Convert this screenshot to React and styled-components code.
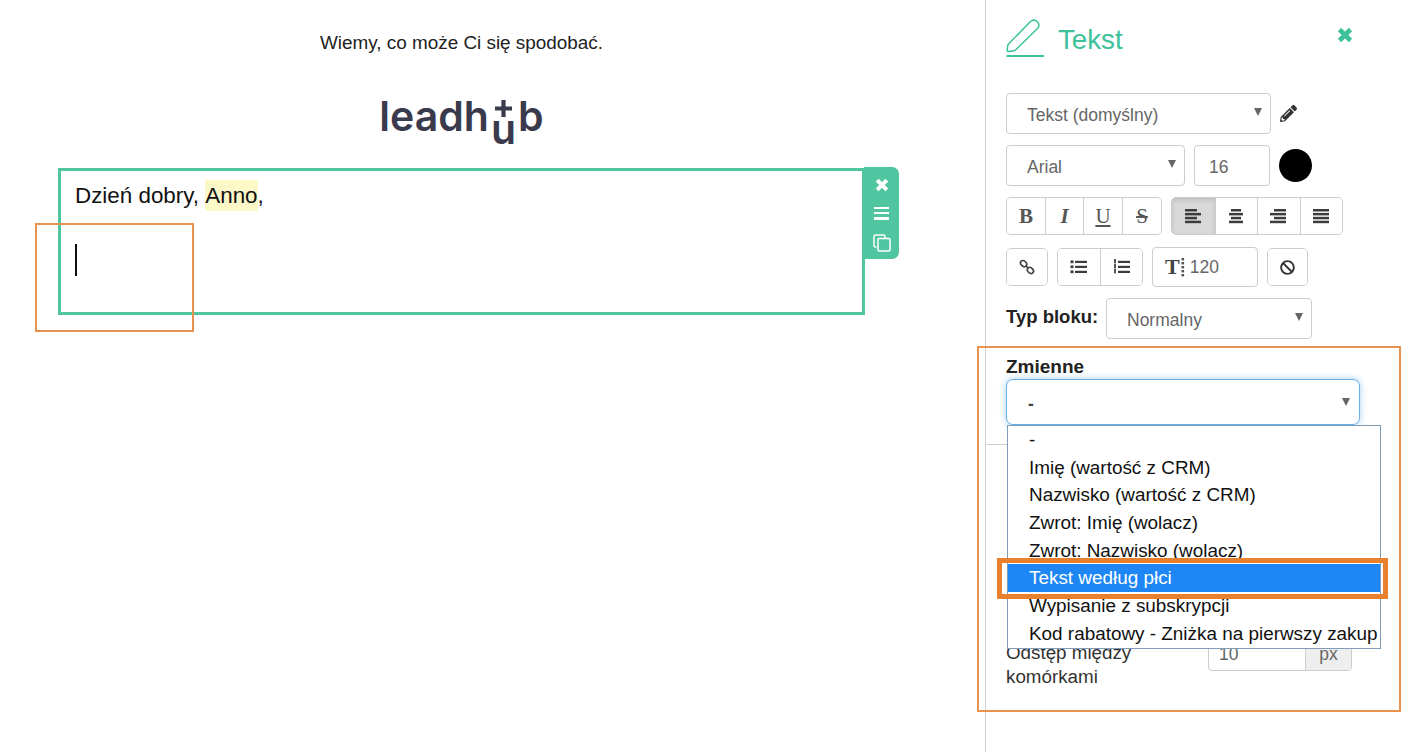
import React from 'react'
import styled, { createGlobalStyle } from 'styled-components'
import { FaPencilAlt, FaBan } from 'react-icons/fa'

const GlobalStyle = createGlobalStyle`
  html, body { margin: 0; padding: 0; background: #fff; }
  body { font-family: "Liberation Sans", Arial, sans-serif; color: #111; overflow: hidden; }
  * { box-sizing: border-box; }
`

const variables = [
  '-',
  'Imię (wartość z CRM)',
  'Nazwisko (wartość z CRM)',
  'Zwrot: Imię (wolacz)',
  'Zwrot: Nazwisko (wolacz)',
  'Tekst według płci',
  'Wypisanie z subskrypcji',
  'Kod rabatowy - Zniżka na pierwszy zakup',
]

const CloseX = ({ size, color }) => (
  <svg width={size} height={size} viewBox="0 0 16 16" stroke={color} strokeWidth="4.6" fill="none">
    <path d="M2.5 2.5l11 11M13.5 2.5l-11 11" />
  </svg>
)

const AlignIcon = ({ rows }) => (
  <svg width="18" height="15" viewBox="0 0 18 15">
    {rows.map(([x, w], i) => (
      <rect key={i} x={x} y={i * 3.9} width={w} height="2.5" fill="#3c3c3c" />
    ))}
  </svg>
)

const ListIcon = ({ numbered }) => (
  <svg width="18" height="16" viewBox="0 0 18 16">
    {[2, 7, 12].map((y) => (
      <g key={y}>
        {numbered ? (
          <rect x="1" y={y - 2} width="2" height="4.4" fill="#555" />
        ) : (
          <rect x="0.5" y={y - 0.6} width="3" height="2.8" fill="#3c3c3c" />
        )}
        <rect x="5" y={y - 0.2} width="12" height="2.2" fill="#3c3c3c" />
      </g>
    ))}
  </svg>
)

const App = () => {
  return (
    <Page>
      <GlobalStyle />
      <Canvas>
        <Tagline>Wiemy, co może Ci się spodobać.</Tagline>
        <Logo>
          <span>leadh</span>
          <LogoHub>
            <svg width="17" height="17" viewBox="0 0 17 17" stroke="#3a3a4d" strokeWidth="4.2">
              <path d="M8.5 0v17M0 8.5h17" />
            </svg>
            <span>u</span>
          </LogoHub>
          <span>b</span>
        </Logo>
        <TextBlock>
          <Greeting>Dzień dobry, <Mark>Anno</Mark>,</Greeting>
          <Caret />
          <BlockTools>
            <CloseX size={14} color="#fff" />
            <MenuBars><i /><i /><i /></MenuBars>
            <svg width="18" height="18" viewBox="0 0 18 18" fill="none" stroke="#fff" strokeWidth="1.5">
              <rect x="5" y="4.5" width="12" height="12.5" rx="1" />
              <path d="M3.5 13H2.5a1.5 1.5 0 0 1-1.5-1.5V2.5A1.5 1.5 0 0 1 2.5 1h8A1.5 1.5 0 0 1 12 2.5v1.5" />
            </svg>
          </BlockTools>
        </TextBlock>
        <CalloutSmall />
      </Canvas>

      <Sidebar>
        <PanelHeader>
          <svg width="40" height="40" viewBox="0 0 40 40" fill="none" stroke="#3cc19b">
            <g transform="translate(0 -1.5)">
              <path d="M2 27 L24.5 4 Q27.5 1.5 30.5 3.5 L32 5 Q34 8 31.5 11 L9 33 L2.5 34 Q1 34 1.2 32 Z" strokeWidth="1.5" />
            </g>
            <path d="M0.5 37 H38" strokeWidth="2" />
          </svg>
          <PanelTitle>Tekst</PanelTitle>
          <PanelClose><CloseX size={16} color="#3cc19b" /></PanelClose>
        </PanelHeader>

        <Row $top={34}>
          <SelectBox $width={265}>Tekst (domyślny)</SelectBox>
          <EditIcon><FaPencilAlt size={17} /></EditIcon>
        </Row>

        <Row $top={11}>
          <SelectBox $width={179}>Arial</SelectBox>
          <SizeInput>16</SizeInput>
          <Swatch />
        </Row>

        <Row $top={11}>
          <BtnGroup>
            <GlyphBtn $w={38}><b>B</b></GlyphBtn>
            <GlyphBtn $w={38}><i>I</i></GlyphBtn>
            <GlyphBtn $w={39}><u>U</u></GlyphBtn>
            <GlyphBtn $w={39}><s>S</s></GlyphBtn>
          </BtnGroup>
          <BtnGroup>
            <GlyphBtn $w={43} $active><AlignIcon rows={[[0, 12], [0, 16], [0, 12], [0, 16]]} /></GlyphBtn>
            <GlyphBtn $w={42}><AlignIcon rows={[[3, 10], [1, 14], [3, 10], [1, 14]]} /></GlyphBtn>
            <GlyphBtn $w={43}><AlignIcon rows={[[4, 12], [0, 16], [4, 12], [0, 16]]} /></GlyphBtn>
            <GlyphBtn $w={42}><AlignIcon rows={[[0, 16], [0, 16], [0, 16], [0, 16]]} /></GlyphBtn>
          </BtnGroup>
        </Row>

        <Row $top={12}>
          <BtnGroup>
            <GlyphBtn $w={40}>
              <svg width="16" height="16" viewBox="0 0 16 16" fill="none" stroke="#444" strokeWidth="1.7">
                <ellipse cx="4.6" cy="4.6" rx="3.4" ry="2.6" transform="rotate(45 4.6 4.6)" />
                <ellipse cx="11.4" cy="11.4" rx="3.4" ry="2.6" transform="rotate(45 11.4 11.4)" />
                <path d="M6.5 6.5l3 3" />
              </svg>
            </GlyphBtn>
          </BtnGroup>
          <BtnGroup>
            <GlyphBtn $w={42}><ListIcon /></GlyphBtn>
            <GlyphBtn $w={42}><ListIcon numbered /></GlyphBtn>
          </BtnGroup>
          <LineHeightBox>
            <BigT>T</BigT>
            <DotsIcon width="4" height="20" viewBox="0 0 4 20" fill="#555">
              {[1, 5, 9, 13, 17].map((y) => <rect key={y} x="0.5" y={y} width="2.6" height="2.4" />)}
            </DotsIcon>
            <span>120</span>
          </LineHeightBox>
          <BtnGroup>
            <GlyphBtn $w={39}><FaBan size={15} color="#333" /></GlyphBtn>
          </BtnGroup>
        </Row>

        <Row $top={11}>
          <BoldLabel>Typ bloku:</BoldLabel>
          <SelectBox $width={206}>Normalny</SelectBox>
        </Row>

        <VarLabel>Zmienne</VarLabel>
        <VarWrap>
          <FocusSelect>-</FocusSelect>
          <Dropdown>
            {variables.map((v, i) => (
              <Option key={v} $selected={i === 5}>{v}</Option>
            ))}
          </Dropdown>
        </VarWrap>

        <CellSection>
          <CellLabel>Odstęp między komórkami</CellLabel>
          <CellInput>
            <span>10</span>
            <Unit>px</Unit>
          </CellInput>
        </CellSection>

        <CalloutBig />
        <CalloutOption />
      </Sidebar>
    </Page>
  )
}

const Page = styled.div`
  display: flex;
  width: 1424px;
  height: 752px;
  overflow: hidden;
`
const Canvas = styled.main`
  position: relative;
  width: 985px;
  padding: 0 120px 0 58px;
`
const Tagline = styled.p`
  margin: 0;
  padding-top: 31px;
  text-align: center;
  font-size: 18.9px;
  line-height: 23px;
  color: #222;
`
const Logo = styled.div`
  display: flex;
  justify-content: center;
  align-items: flex-start;
  gap: 2px;
  height: 50px;
  margin: 37px 0 27px;
  font-family: Inter, "Liberation Sans", sans-serif;
  font-size: 41px;
  font-weight: 600;
  line-height: 50px;
  color: #3a3a4d;
`
const LogoHub = styled.div`
  display: flex;
  flex-direction: column;
  align-items: center;
  height: 50px;
  svg { margin-top: 8.5px; flex: none; }
  span { line-height: 24px; }
`
const TextBlock = styled.div`
  position: relative;
  width: 807px;
  height: 147px;
  border: 3px solid #4fc6a0;
  padding: 9px 0 0 14px;
`
const Greeting = styled.div`
  font-size: 22.4px;
  line-height: 31px;
  color: #111;
`
const Mark = styled.span`
  background: #fdf8c8;
  display: inline-block;
`
const Caret = styled.div`
  width: 2px;
  height: 32px;
  margin-top: 33px;
  background: #111;
`
const BlockTools = styled.div`
  position: absolute;
  top: -4px;
  right: -37px;
  width: 35px;
  height: 92px;
  background: #4fc6a0;
  border-radius: 0 7px 7px 0;
  color: #fff;
  display: flex;
  flex-direction: column;
  align-items: center;
  gap: 14.5px;
  padding-top: 11px;
`
const MenuBars = styled.div`
  display: flex;
  flex-direction: column;
  gap: 3px;
  i { display: block; width: 15px; height: 2.4px; background: #fff; }
`
const CalloutSmall = styled.div`
  position: absolute;
  left: 35px;
  top: 223px;
  width: 159px;
  height: 109px;
  border: 2px solid #e8924f;
`
const Sidebar = styled.aside`
  position: relative;
  flex: 1;
  border-left: 1px solid #cfcfcf;
  padding-left: 20px;
`
const PanelHeader = styled.header`
  display: flex;
  align-items: center;
  gap: 12px;
  height: 40px;
  margin-top: 19px;
  width: 347px;
  position: relative;
`
const PanelTitle = styled.h2`
  margin: 1px 0 0;
  font-size: 27.7px;
  font-weight: 400;
  color: #3cc19b;
`
const PanelClose = styled.span`
  position: absolute;
  right: 0;
  top: 8px;
  display: flex;
`
const Row = styled.div`
  display: flex;
  align-items: center;
  gap: 9px;
  margin-top: ${(p) => p.$top}px;
`
const fieldText = `
  font-size: 17.5px;
  color: #666;
  background: #fff;
  border: 1px solid #ccc;
  border-radius: 4px;
`
const SelectBox = styled.div`
  ${fieldText}
  position: relative;
  width: ${(p) => p.$width}px;
  height: 41px;
  line-height: 43px;
  padding-left: 20px;
  &::after {
    content: '';
    position: absolute;
    right: 8px;
    top: 14px;
    border-left: 4.5px solid transparent;
    border-right: 4.5px solid transparent;
    border-top: 8px solid #666;
  }
`
const EditIcon = styled.span`
  display: flex;
  color: #333;
`
const SizeInput = styled.div`
  ${fieldText}
  width: 76px;
  height: 41px;
  line-height: 43px;
  padding-left: 14px;
`
const Swatch = styled.span`
  width: 33px;
  height: 33px;
  border-radius: 50%;
  background: #000;
`
const BtnGroup = styled.div`
  display: flex;
  height: 38px;
  border: 1px solid #ccc;
  border-radius: 5px;
  overflow: hidden;
  background: #fff;
`
const GlyphBtn = styled.div`
  width: ${(p) => p.$w}px;
  display: flex;
  align-items: center;
  justify-content: center;
  font-family: "Liberation Serif", serif;
  font-size: 21px;
  color: #555;
  background: ${(p) => (p.$active ? '#d9d9d9' : '#fff')};
  box-shadow: ${(p) => (p.$active ? 'inset 0 2px 4px rgba(0,0,0,.14)' : 'none')};
  & + & { border-left: 1px solid #ccc; }
  i { font-weight: 700; }
`
const LineHeightBox = styled.div`
  ${fieldText}
  width: 106px;
  height: 40px;
  display: flex;
  align-items: center;
  padding-left: 12px;
  span { margin-left: 5px; }
`
const BigT = styled.b`
  font-family: "Liberation Serif", serif;
  font-weight: 700;
  font-size: 22px;
  color: #444;
`
const DotsIcon = styled.svg`
  margin-left: 1px;
`
const BoldLabel = styled.label`
  font-size: 18.5px;
  font-weight: 700;
  color: #222;
  width: 91px;
  white-space: nowrap;
  padding-bottom: 4px;
`
const VarLabel = styled.div`
  margin-top: 16px;
  font-size: 19px;
  font-weight: 700;
  line-height: 23px;
  color: #222;
`
const VarWrap = styled.div`
  position: relative;
  margin-top: 1px;
`
const FocusSelect = styled(SelectBox)`
  width: 354px;
  height: 46px;
  line-height: 48px;
  padding-left: 21px;
  color: #444;
  font-weight: 700;
  border-color: #66afe9;
  border-radius: 7px;
  box-shadow: 0 0 7px rgba(102, 175, 233, 0.6);
  &::after { top: 18px; right: 9px; }
`
const Dropdown = styled.ul`
  position: absolute;
  z-index: 2;
  top: 46px;
  left: 1px;
  width: 374px;
  height: 224px;
  margin: 0;
  padding: 0;
  list-style: none;
  background: #fff;
  border: 1px solid #7f9db9;
`
const Option = styled.li`
  height: 27.7px;
  line-height: 27.7px;
  padding-left: 21px;
  font-size: 18.9px;
  white-space: nowrap;
  color: ${(p) => (p.$selected ? '#fff' : '#111')};
  background: ${(p) => (p.$selected ? '#1e87f5' : 'transparent')};
`
const CellSection = styled.section`
  display: flex;
  margin: 19px 0 0 -20px;
  padding: 196px 0 0 20px;
  border-top: 1px solid #cfcfcf;
  width: 394px;
`
const CellLabel = styled.div`
  width: 202px;
  font-size: 18.8px;
  line-height: 24px;
  color: #333;
`
const CellInput = styled.div`
  ${fieldText}
  display: flex;
  width: 144px;
  height: 33px;
  line-height: 30px;
  padding-left: 10px;
  justify-content: space-between;
  margin-top: -3px;
  overflow: hidden;
`
const Unit = styled.span`
  width: 46px;
  background: #eee;
  border-left: 1px solid #ccc;
  text-align: center;
`
const CalloutBig = styled.div`
  position: absolute;
  z-index: 3;
  left: -9px;
  top: 346px;
  width: 424px;
  height: 366px;
  border: 2px solid #e8924f;
`
const CalloutOption = styled.div`
  position: absolute;
  z-index: 3;
  left: 11px;
  top: 558px;
  width: 391px;
  height: 41px;
  border: 5px solid #e8802e;
`

export default App
